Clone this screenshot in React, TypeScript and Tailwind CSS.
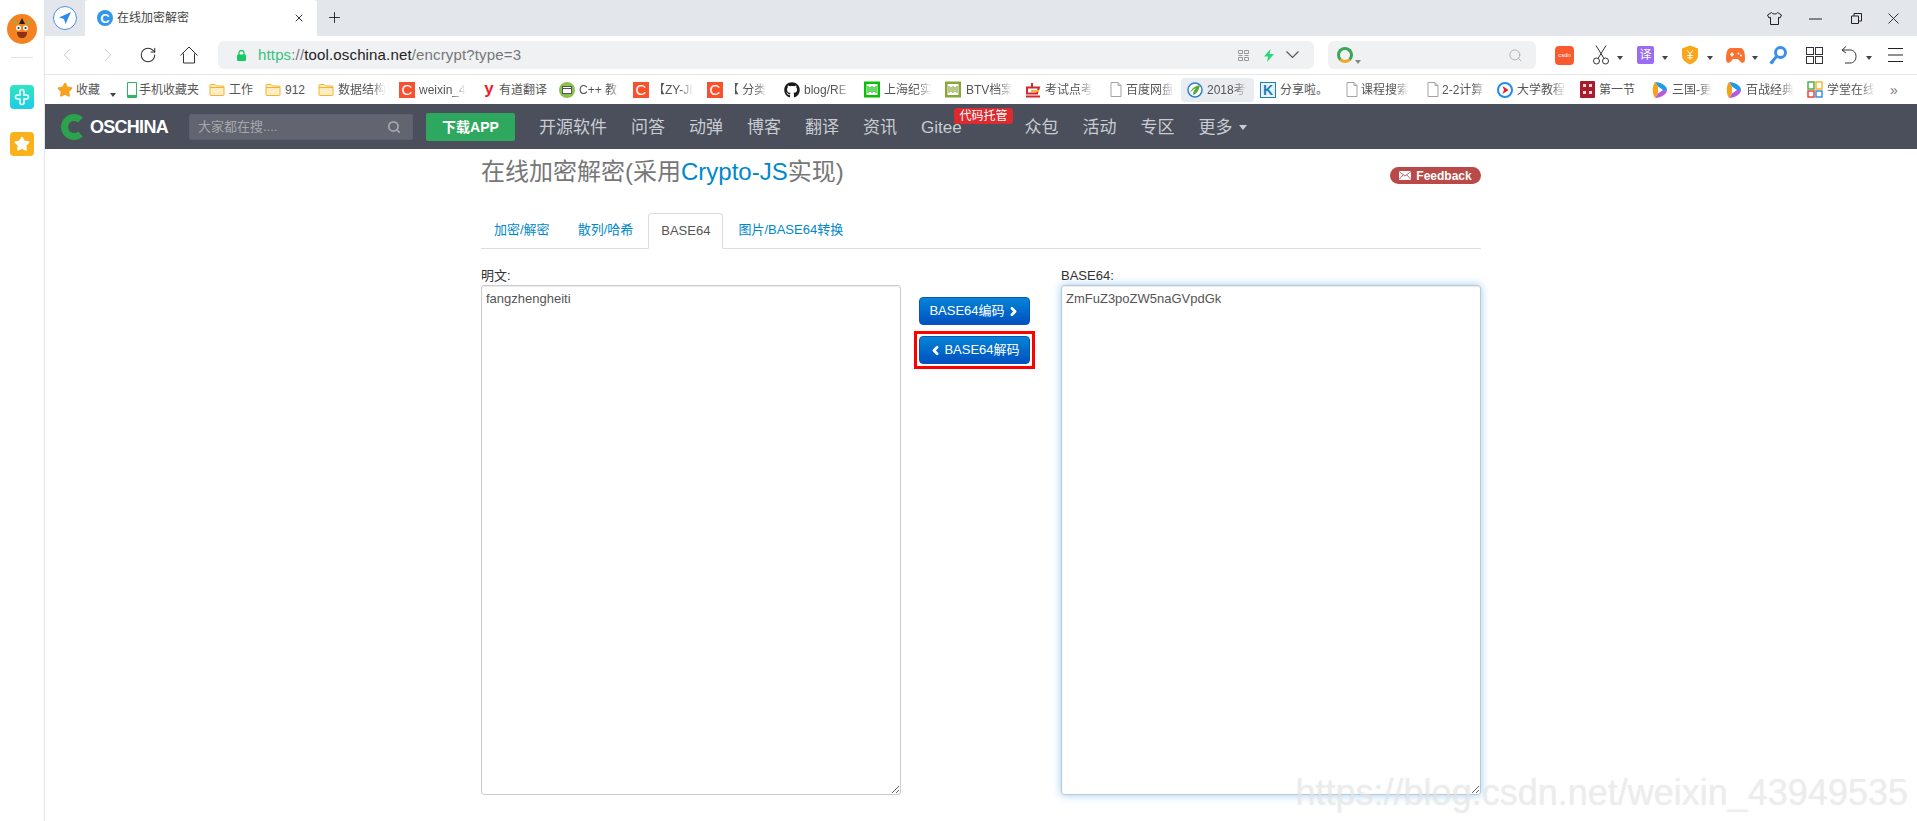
import type { ReactNode } from 'react';
import { ChevronLeft, ChevronRight, RotateCw, Plus, X, Search, Star } from 'lucide-react';
import { FaGithub } from 'react-icons/fa';

const cjk = "font-['Liberation_Sans','Noto_Sans_CJK_SC',sans-serif]";

function Caret({ className = 'border-t-[#444]' }: { className?: string }) {
  return <span className={`inline-block w-0 h-0 border-x-[3px] border-x-transparent border-t-[4px] ${className}`} />;
}

function FolderIcon() {
  return (
    <svg width="16" height="14" viewBox="0 0 16 14">
      <path d="M1 2.5A1 1 0 0 1 2 1.5h4L7.5 3H14a1 1 0 0 1 1 1v7.5a1 1 0 0 1-1 1H2a1 1 0 0 1-1-1z" fill="#ffeec2" stroke="#f5b333" />
      <path d="M1 4.5h14" stroke="#f5b333" />
    </svg>
  );
}

function FileIcon() {
  return (
    <svg width="12" height="15" viewBox="0 0 12 15">
      <path d="M1 .5h7l3 3v11H1z M8 .5v3h3" fill="#fff" stroke="#a3a3a3" />
    </svg>
  );
}

function CsdnC() {
  return <span className="w-4 h-4 bg-[#f9502d] text-white text-[15px] leading-4 text-center font-['Liberation_Sans']">C</span>;
}

function PlayRound({ kind }: { kind: 'blue' | 'multi' }) {
  if (kind === 'blue') {
    return (
      <svg width="16" height="16" viewBox="0 0 16 16">
        <circle cx="8" cy="8" r="7" fill="#fff" stroke="#1f8fe8" strokeWidth="2" />
        <path d="M5.5 4l6 4-6 4L7 8z" fill="#e5202a" />
      </svg>
    );
  }
  return (
    <svg width="16" height="18" viewBox="0 0 16 18">
      <path d="M3 1c6 0 12 4 12 8H8z" fill="#1d9be8" />
      <path d="M3 17c6 0 12-4 12-8H8z" fill="#b25be0" />
      <path d="M3 1C0 5 0 13 3 17l5-8z" fill="#f6a11a" />
      <path d="M6 5.5L11 9l-5 3.5z" fill="#fff" />
    </svg>
  );
}

function IqiyiIcon({ color }: { color: string }) {
  return (
    <svg width="16" height="17" viewBox="0 0 16 17">
      <rect x="0.5" y="1" width="15" height="15" fill={color} stroke={color} />
      <rect x="2.5" y="3" width="11" height="11" fill="#fff" />
      <path d="M4 5v7M6 6v5M8 5v7M10 6v5M12 5v7" stroke={color} strokeWidth="1.2" />
    </svg>
  );
}

const bookmarks = [
  { label: '收藏', w: 67, tx: 19, tw: 26, icon: <Star size={16} className="fill-[#f7a11e] text-[#f7a11e]" />, caret: true },
  { label: '手机收藏夹', w: 85, tx: 15, tw: 62, icon: <span className="w-[10px] h-[16px] border border-[#31b562] rounded-[1px] border-b-[3px]" /> },
  { label: '工作', w: 56, tx: 20, tw: 26, icon: <FolderIcon /> },
  { label: '912', w: 53, tx: 20, tw: 26, icon: <FolderIcon /> },
  { label: '数据结构', w: 81, tx: 20, tw: 48, fade: true, icon: <FolderIcon /> },
  { label: 'weixin_4', w: 82, tx: 20, tw: 47, fade: true, icon: <CsdnC /> },
  { label: '有道翻译', w: 78, tx: 18, tw: 50, icon: <span className="w-4 h-4 text-[#e8202f] text-[17px] leading-[13px] font-bold text-center font-['Liberation_Sans']">y</span> },
  {
    label: 'C++ 教', w: 74, tx: 20, tw: 42, fade: true,
    icon: (
      <svg width="16" height="16" viewBox="0 0 16 16">
        <circle cx="8" cy="8" r="8" fill="#8cc152" />
        <rect x="3.5" y="4.5" width="9" height="7" fill="#fff" stroke="#555" />
        <path d="M3.5 6.5h9" stroke="#555" />
      </svg>
    ),
  },
  { label: '【ZY-JI', w: 74, tx: 20, tw: 40, fade: true, icon: <CsdnC /> },
  { label: '【 分类', w: 77, tx: 20, tw: 40, fade: true, icon: <CsdnC /> },
  { label: 'blog/RE', w: 80, tx: 20, tw: 46, fade: true, icon: <FaGithub size={16} className="text-[#1a1a1a]" /> },
  { label: '上海纪实', w: 81, tx: 20, tw: 48, fade: true, icon: <IqiyiIcon color="#0bbe06" /> },
  { label: 'BTV档案', w: 80, tx: 21, tw: 46, fade: true, icon: <IqiyiIcon color="#8aa63a" /> },
  {
    label: '考试点考', w: 83, tx: 20, tw: 48, fade: true,
    icon: (
      <svg width="16" height="16" viewBox="0 0 16 16">
        <path d="M7 1v4M2 5.5h12l-2 6H2zM1 14.5h14" fill="none" stroke="#d0282e" strokeWidth="2" />
        <path d="M6 9h8" stroke="#f2b632" strokeWidth="2" />
      </svg>
    ),
  },
  { label: '百度网盘', w: 79, tx: 18, tw: 48, fade: true, icon: <FileIcon /> },
  {
    label: '2018考', w: 73, tx: 20, tw: 40, fade: true, active: true,
    icon: (
      <svg width="16" height="16" viewBox="0 0 16 16">
        <circle cx="8" cy="8" r="7" fill="#fff" stroke="#2f80c8" strokeWidth="1.5" />
        <path d="M3 11c2-5 5-7 10-8-1 5-3 9-7 10 0-3 1-5 3-7-3 1-4 3-6 5z" fill="#58a83a" />
      </svg>
    ),
  },
  { label: '分享啦。', w: 84, tx: 20, tw: 48, icon: <span className="w-4 h-4 border border-[#1d7fb8] bg-[#e8f4fb] text-[#1d7fb8] text-[14px] leading-[14px] font-bold text-center font-['Liberation_Sans']">K</span> },
  { label: '课程搜索', w: 81, tx: 17, tw: 48, fade: true, icon: <FileIcon /> },
  { label: '2-2计算', w: 72, tx: 17, tw: 44, fade: true, icon: <FileIcon /> },
  { label: '大学教程', w: 82, tx: 20, tw: 49, fade: true, icon: <PlayRound kind="blue" /> },
  {
    label: '第一节', w: 73, tx: 20, tw: 38, icon: (
      <svg width="15" height="17" viewBox="0 0 15 17">
        <rect width="15" height="17" rx="1" fill="#a81c2b" />
        <path d="M3 3h3v3H3zM9 3h3v3H9zM3 10h3v3H3zM9 10h3v3H9z" fill="#f4d7d7" />
      </svg>
    ),
  },
  { label: '三国-更', w: 74, tx: 20, tw: 40, fade: true, icon: <PlayRound kind="multi" /> },
  { label: '百战经典', w: 81, tx: 20, tw: 48, fade: true, icon: <PlayRound kind="multi" /> },
  {
    label: '学堂在线', w: 83, tx: 20, tw: 48, fade: true,
    icon: (
      <svg width="16" height="17" viewBox="0 0 16 17" fill="none" strokeWidth="1.5">
        <rect x="1" y="1" width="6" height="7" stroke="#4caf50" />
        <rect x="9" y="1" width="6" height="7" stroke="#f5b82e" />
        <rect x="1" y="10" width="6" height="6" stroke="#e8453c" />
        <rect x="9" y="10" width="6" height="6" stroke="#3b8fe8" />
      </svg>
    ),
  },
];

const navItems = ['问答', '动弹', '博客', '翻译', '资讯'];

function Browser() {
  return (
    <>
      {/* tab strip */}
      <div className="h-9 bg-[#e3e6ea] flex items-end shrink-0 relative">
        <div className="w-[24px] h-[24px] ml-2 mb-[6px] rounded-full border border-[#4a90e2] bg-white flex items-center justify-center">
          <svg width="14" height="14" viewBox="0 0 14 14"><path d="M13 1L1 6.5l5 1.5L7.5 13z" fill="#2f88ee" /></svg>
        </div>
        <div className="w-[232px] h-9 ml-2 bg-white rounded-t-[3px] flex items-center pl-3 pr-3">
          <span className="w-4 h-4 rounded-full bg-[#2f97ee] flex items-center justify-center text-white text-[13px] font-bold leading-none font-['Liberation_Sans']">C</span>
          <span className="ml-1 text-xs text-[#444]">在线加密解密</span>
          <X size={12} className="ml-auto text-[#333]" />
        </div>
        <Plus size={17} strokeWidth={1.3} className="ml-[9px] mb-[10px] text-[#222]" />
        <div className="ml-auto mb-[11px] flex items-center text-[#222]">
          <svg width="15" height="13" viewBox="0 0 15 13" fill="none" stroke="currentColor">
            <path d="M4.5.5L.5 3 2 6l1.500-.7v7.200h8V5.300L13 6l1.500-3-4-2.500c-.5 2-5 2-6 0z" />
          </svg>
          <svg width="13" height="2" viewBox="0 0 13 2" className="ml-[27px]"><path d="M0 1h13" stroke="currentColor" /></svg>
          <svg width="11" height="11" viewBox="0 0 11 11" fill="none" stroke="currentColor" className="ml-[29px]">
            <path d="M.5 3h7v7.500h-7z M3 3V.5h7.500V8H8" />
          </svg>
          <svg width="11" height="11" viewBox="0 0 11 11" stroke="#333" className="ml-[26px] mr-[18px]"><path d="M.5.5l10 10M10.500.5l-10 10" /></svg>
        </div>
      </div>

      {/* toolbar */}
      <div className="h-[38px] bg-white flex items-center shrink-0">
        <ChevronLeft size={22} strokeWidth={1} className="ml-[11px] text-[#c4c4c4]" />
        <ChevronRight size={22} strokeWidth={1} className="ml-[19px] text-[#c4c4c4]" />
        <RotateCw size={18} strokeWidth={1.4} className="ml-[20px] text-[#333]" />
        <svg width="18" height="18" viewBox="0 0 18 18" fill="none" stroke="#333" className="ml-[23px]">
          <path d="M.5 9.500L9 1l8.500 8.500M3.500 7.500V17h11V7.500" />
        </svg>
        <div className="ml-[20px] w-[1096px] h-[28px] bg-[#eff1f3] rounded-md flex items-center pl-[19px]">
          <svg width="9" height="11" viewBox="0 0 9 11">
            <path d="M2 5V3a2.500 2.500 0 0 1 5 0v2" fill="none" stroke="#17c964" strokeWidth="1.3" />
            <rect y="4.5" width="9" height="6.5" rx="1" fill="#17c964" />
          </svg>
          <span className="ml-[12px] text-[15px] tracking-[0.01em] font-['Liberation_Sans'] text-[#777]">
            <span className="text-[#34c47a]">https</span>://<span className="text-[#222]">tool.oschina.net</span>/encrypt?type=3
          </span>
          <svg width="11" height="11" viewBox="0 0 11 11" fill="none" stroke="#999" className="ml-auto">
            <path d="M.5.5h4v3h-4zM6.500.5h4v3h-4zM.5 7.500h4v3h-4zM6.500 7.500h4v3h-4zM.5 5.500h4M6.500 5.500h4" />
          </svg>
          <svg width="10" height="13" viewBox="0 0 10 13" className="ml-[15px]"><path d="M6.500 0L0 7.500h4L3 13l7-8H5.500z" fill="#2bd67b" /></svg>
          <svg width="13" height="8" viewBox="0 0 13 8" fill="none" stroke="#555" strokeWidth="1.2" className="ml-[12px] mr-[15px]"><path d="M.5.5l6 6 6-6" /></svg>
        </div>
        <div className="ml-[14px] w-[208px] h-[28px] bg-[#eff1f3] rounded-md flex items-center pl-[9px]">
          <span className="w-4 h-4 rounded-full border-[3px] border-[#3aa757] border-b-[#f5a623]" />
          <span className="ml-[2px] mt-2"><Caret className="border-t-[#888]" /></span>
          <Search size={15} strokeWidth={1.1} className="ml-auto mr-[13px] text-[#999]" />
        </div>
        <div className="ml-[19px] w-[19px] h-[19px] bg-[#fb5a2f] rounded-[4px] text-white text-[6px] leading-[19px] text-center font-['Liberation_Sans']">csdn</div>
        <svg width="16" height="20" viewBox="0 0 16 20" fill="none" stroke="#333" className="ml-[19px]">
          <circle cx="3.5" cy="16" r="3" />
          <circle cx="12.5" cy="16" r="3" />
          <path d="M5 13.500L13 .5M11 13.500L3 .5" />
        </svg>
        <span className="ml-[8px]"><Caret /></span>
        <div className="ml-[14px] w-[17px] h-[18px] bg-[#9a6bf5] rounded-[2px] text-white text-[12px] leading-[18px] text-center">译</div>
        <span className="ml-[8px]"><Caret /></span>
        <svg width="16" height="20" viewBox="0 0 17 20" className="ml-[14px]">
          <path d="M8.5 0L17 3v8c0 4-4 7-8.500 9C4 18 0 15 0 11V3z" fill="#f9a61a" />
          <path d="M5.5 5l3 4 3-4M8.500 9v6M5.500 10.500h6M5.500 13h6" fill="none" stroke="#fff" />
        </svg>
        <span className="ml-[9px]"><Caret /></span>
        <svg width="19" height="15" viewBox="0 0 19 15" className="ml-[13px]">
          <path d="M5 0h9c2.500 0 4 2 4.500 5 .5 3 .7 6 .2 8-.5 2-3 2.500-4.500.5L12 11H7l-2.200 2.500C3.300 15.500.8 15 .3 13-.2 11 0 8 .5 5 1 2 2.500 0 5 0z" fill="#f9712f" />
          <path d="M4 6.500h4M6 4.500v4" stroke="#fff" strokeWidth="1.5" />
          <circle cx="12.5" cy="5.5" r="1" fill="#fff" />
          <circle cx="15" cy="7.5" r="1" fill="#fff" />
        </svg>
        <span className="ml-[7px]"><Caret /></span>
        <svg width="18" height="19" viewBox="0 0 18 19" fill="none" stroke="#3b8fec" strokeWidth="3" className="ml-[11px]">
          <circle cx="11.5" cy="6.5" r="5" />
          <path d="M7.500 10.500L1.500 17.500M2.500 15l2 2" />
        </svg>
        <svg width="17" height="17" viewBox="0 0 17 17" fill="none" stroke="#333" className="ml-[19px]">
          <rect x="0.5" y="0.5" width="7" height="7" />
          <rect x="9.5" y="0.5" width="7" height="7" />
          <rect x="0.5" y="9.5" width="7" height="7" />
          <rect x="9.5" y="9.5" width="7" height="7" />
        </svg>
        <svg width="16" height="18" viewBox="0 0 16 18" fill="none" stroke="#333" className="ml-[18px]">
          <path d="M5 .5L1 4l4 3M1 4h8c3.500 0 6 2.500 6 6.500S12.500 17 9 17H4" />
        </svg>
        <span className="ml-[9px]"><Caret /></span>
        <svg width="15" height="14" viewBox="0 0 15 14" stroke="#222" className="ml-[16px]"><path d="M0 .5h15M0 7h15M0 13.500h15" /></svg>
      </div>

      {/* bookmarks */}
      <div className="h-[30px] border-t border-[#e6e6e6] bg-white flex items-center pl-3 text-xs text-[#555] shrink-0">
        {bookmarks.map(b => (
          <div key={b.label} className="relative shrink-0 h-[24px] flex items-center" style={{ width: b.w }}>
            {b.active && <span className="absolute -left-[6px] top-0 bottom-0 w-[73px] rounded-sm bg-[#e9ecf0]" />}
            <span className="relative w-4 flex justify-center shrink-0">{b.icon}</span>
            <span
              className={`absolute whitespace-nowrap overflow-hidden ${b.fade ? '[mask-image:linear-gradient(to_right,black_70%,transparent)]' : ''}`}
              style={{ left: b.tx, width: b.tw }}
            >
              {b.label}
            </span>
            {b.caret && <span className="absolute left-[53px] top-[7px]"><Caret /></span>}
          </div>
        ))}
        <span className="text-[#777] text-sm">»</span>
      </div>
    </>
  );
}

function SiteNav() {
  return (
    <div className="h-[45px] bg-[#4a4f5b] flex items-center shrink-0 text-[17px] text-[#c9ccd1]">
      <svg width="24" height="26" viewBox="0 0 24 26" className="ml-4">
        <path d="M19.5 6A9.500 9.500 0 1 0 19.500 20" fill="none" stroke="#2ba24c" strokeWidth="7" />
      </svg>
      <span className="ml-[5px] text-[18px] leading-none font-bold text-white tracking-[-0.04em] font-['Liberation_Sans']">OSCHINA</span>
      <div className="ml-[21px] w-[224px] h-[26px] bg-[#62646f] border border-[#5b6178] rounded-[2px] flex items-center pl-2 text-[13px] text-[#a5a7ad]">
        大家都在搜....
        <Search size={14} strokeWidth={3} className="ml-auto mr-[11px] text-[#a5a7ad]" />
      </div>
      <div className="ml-[13px] w-[89px] h-[28px] bg-[#2fa85f] rounded-[2px] text-[14px] leading-[28px] font-bold text-white text-center">下载APP</div>
      <div className="ml-6 pt-[2px]">开源软件</div>
      <div className="ml-6 pt-[2px] flex gap-6">
        {navItems.map(n => <span key={n}>{n}</span>)}
      </div>
      <div className="ml-6 pt-[2px] relative font-['Liberation_Sans','Noto_Sans_CJK_SC']">
        Gitee
        <span className="absolute left-[33px] -top-[5px] w-[59px] h-4 rounded-[3px] bg-[#dc2a2f] text-white text-[12px] leading-4 text-center">代码托管</span>
      </div>
      <div className="ml-[63px] pt-[2px] flex gap-6">
        <span>众包</span>
        <span>活动</span>
        <span>专区</span>
      </div>
      <div className="ml-6 pt-[2px] flex items-center gap-[6px]">
        更多
        <span className="inline-block w-0 h-0 border-x-[4px] border-x-transparent border-t-[5px] border-t-[#c9ccd1]" />
      </div>
    </div>
  );
}

function ActionButton({ children }: { children: ReactNode }) {
  return (
    <button className="w-[111px] h-7 rounded-[4px] bg-gradient-to-b from-[#0a84d6] to-[#0450c0] border border-[#0456b8] text-white text-[13px] flex items-center justify-center gap-[2px]">
      {children}
    </button>
  );
}

function Encrypt() {
  return (
    <div className="w-[1000px] mx-auto text-[13px] text-[#333]">
      <div className="flex items-start justify-between">
        <h1 className="pt-[7px] text-[24px] leading-8 text-[#777]">
          在线加密解密(采用<span className="text-[#0088cc]">Crypto-JS</span>实现)
        </h1>
        <span className="mt-[18px] w-[91px] h-[17px] rounded-full bg-[#b94a48] text-white text-[12px] font-bold flex items-center justify-center gap-[5px]">
          <svg width="12" height="9" viewBox="0 0 12 9">
            <rect width="12" height="9" fill="#fff" />
            <path d="M0 .5l6 4.500 6-4.500M0 8.500l4.500-5M12 8.500l-4.500-5" fill="none" stroke="#b94a48" strokeWidth="0.8" />
          </svg>
          Feedback
        </span>
      </div>

      <div className="mt-[25px] h-[36px] border-b border-[#ddd] flex gap-[2px] text-[#0088cc]">
        <span className="px-[13px] leading-[34px]">加密/解密</span>
        <span className="px-[13px] leading-[34px]">散列/哈希</span>
        <span className="px-[12px] h-[36px] leading-[34px] text-[#555] bg-white border border-[#ddd] border-b-white rounded-t-[4px]">BASE64</span>
        <span className="px-[13px] leading-[34px]">图片/BASE64转换</span>
      </div>

      <div className="mt-[17px] flex">
        <div className="w-[420px]">
          <label className="block h-[19px] leading-[19px]">明文:</label>
          <textarea
            readOnly
            defaultValue="fangzhengheiti"
            className={`block w-full h-[510px] px-1 py-1 border border-[#ccc] rounded-[3px] outline-none text-[13px] leading-[18px] text-[#555] shadow-[inset_0_1px_1px_rgba(0,0,0,0.08)] ${cjk}`}
          />
        </div>
        <div className="w-[160px] pl-[18px] pt-[31px] flex flex-col items-start">
          <ActionButton>BASE64编码 <ChevronRight size={13} strokeWidth={5} /></ActionButton>
          <div className="mt-[6px] -ml-[5px] p-[2px] border-[3px] border-[#f00]">
            <ActionButton><ChevronLeft size={13} strokeWidth={5} /> BASE64解码</ActionButton>
          </div>
        </div>
        <div className="w-[420px]">
          <label className="block h-[19px] leading-[19px]">BASE64:</label>
          <textarea
            readOnly
            defaultValue="ZmFuZ3poZW5naGVpdGk"
            className={`block w-full h-[510px] px-1 py-1 border border-[#bcc9d4] rounded-[3px] outline-none text-[13px] leading-[18px] text-[#555] shadow-[inset_0_1px_1px_rgba(0,0,0,0.08),0_0_8px_rgba(82,168,236,0.6)] ${cjk}`}
          />
        </div>
      </div>
    </div>
  );
}

export default function App() {
  return (
    <div className={`relative h-screen w-screen overflow-hidden bg-white flex ${cjk}`}>
      {/* side rail */}
      <div className="w-[45px] shrink-0 border-r border-[#e5e5e5] flex flex-col items-center pt-[14px]">
        <div className="w-[30px] h-[30px] rounded-full bg-[#f58220] flex items-center justify-center">
          <svg width="20" height="22" viewBox="0 0 20 22">
            <path d="M10 0l3 6H7z" fill="#222" />
            <path d="M2 2l3 5M18 2l-3 5" stroke="#7ac143" strokeWidth="1.5" />
            <circle cx="6.5" cy="10" r="2.5" fill="#fff" />
            <circle cx="13.5" cy="10" r="2.5" fill="#fff" />
            <circle cx="6.5" cy="10" r="1" fill="#222" />
            <circle cx="13.5" cy="10" r="1" fill="#222" />
            <path d="M5 14h10c0 4-2 6-5 6s-5-2-5-6z" fill="#8a3212" />
          </svg>
        </div>
        <div className="mt-[13px] w-[22px] border-t border-[#e0e0e0]" />
        <div className="mt-[27px] w-6 h-6 rounded-[4px] bg-gradient-to-b from-[#2fe6c0] to-[#1fcbe6] flex items-center justify-center">
          <svg width="16" height="18" viewBox="0 0 16 18" fill="none" stroke="#fff" strokeWidth="1.6">
            <path d="M6 7V3.500a2 2 0 0 1 4 0V7h2.500a2 2 0 0 1 0 4H10v3.500a2 2 0 0 1-4 0V11H3.500a2 2 0 0 1 0-4z" />
          </svg>
        </div>
        <div className="mt-[23px] w-6 h-6 rounded-[4px] bg-[#fbb11a] flex items-center justify-center">
          <Star size={16} className="fill-white text-white" />
        </div>
      </div>

      <div className="flex-1 min-w-0 flex flex-col">
        <Browser />
        <SiteNav />
        <Encrypt />
      </div>

      {/* csdn watermark */}
      <div className="absolute right-[9px] bottom-[8px] text-[36px] leading-[40px] whitespace-nowrap font-['Liberation_Sans'] text-[#f1f1f1]/60 [text-shadow:0_0_1px_rgba(150,150,150,0.25)] pointer-events-none">
        https://blog.csdn.net/weixin_43949535
      </div>
    </div>
  );
}
